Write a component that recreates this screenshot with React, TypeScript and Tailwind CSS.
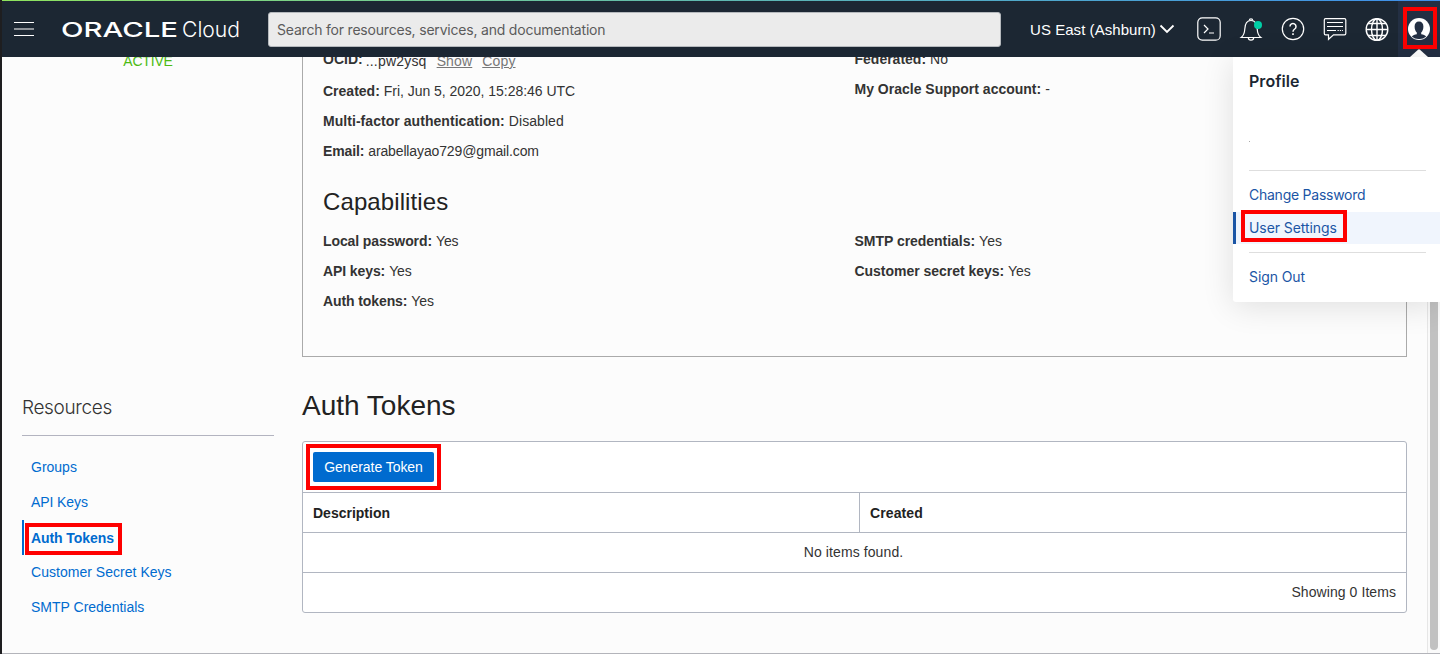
import type { ReactNode } from 'react';

function Field({ label, children }: { label: string; children: ReactNode }) {
  return (
    <div className="flex h-[30px] items-center gap-1 whitespace-nowrap">
      <span className="font-bold">{label}</span>
      <span>{children}</span>
    </div>
  );
}

function Header() {
  return (
    <header className="flex h-[57px] shrink-0 flex-col bg-[#1c2733] text-white">
      <div className="h-px shrink-0 bg-linear-to-r from-[#8fe35c] via-[#5fb8b0] to-[#3f8eea]" />
      <div className="flex flex-1 items-center">
        <svg className="ml-3 h-4 w-5 shrink-0" viewBox="0 0 20 16" shapeRendering="crispEdges">
          <path d="M0 1.5h20M0 14.5h20" stroke="#fff" />
          <path d="M0 8h20" stroke="#8e9399" strokeWidth="2" />
        </svg>
        <svg className="ml-7 h-8 w-[180px] shrink-0" viewBox="0 0 180 32" fill="#fff">
          <text x="-1" y="23.700" fontFamily="Inter" fontWeight="500" fontSize="20.500" textLength="117" lengthAdjust="spacingAndGlyphs">ORACLE</text>
          <text x="120" y="24" fontFamily="Inter" fontWeight="300" fontSize="22" textLength="58" lengthAdjust="spacingAndGlyphs">Cloud</text>
        </svg>
        <div className="ml-[26px] flex h-[35px] w-[733px] shrink-0 items-center rounded-[3px] border border-[#b5b9bd] bg-[#ebebeb] px-2 font-[Inter] text-[14px] tracking-[-0.2px] text-[#5b5b5b]">
          Search for resources, services, and documentation
        </div>
        <div className="ml-[29px] mt-[2px] w-[125px] shrink-0 whitespace-nowrap text-[15px] tracking-[0.05px]">US East (Ashburn)</div>
        <svg className="ml-1 h-[10px] w-4 shrink-0" viewBox="0 0 16 10" fill="none" stroke="#fff" strokeWidth="1.8">
          <path d="M1.500 1.500 8 8l6.500-6.500" />
        </svg>
        <div className="ml-[22px] flex shrink-0 items-center gap-[18px]">
          <svg className="size-6" viewBox="0 0 24 24" fill="none" stroke="#fff" strokeWidth="1.200">
            <rect x="0.800" y="0.800" width="22.400" height="22.400" rx="4.500" />
            <path d="m7 8 4 4-4 4M12 16h5" />
          </svg>
          <svg className="size-6" viewBox="0 0 24 24" fill="none" stroke="#fff" strokeWidth="1.200">
            <path d="M2.200 20.500c2.300-1.800 3.300-4 3.600-8.500.2-5 1.800-8.500 6.200-8.500s6 3.500 6.200 8.500c.3 4.500 1.300 6.700 3.600 8.500Z" />
            <path d="M10.300 3.500a1.700 1.700 0 1 1 3.400 0M9.300 20.500a2.700 2.700 0 0 0 5.400 0" />
            <circle cx="19" cy="8" r="4" fill="#00cea6" stroke="none" />
          </svg>
          <svg className="size-6" viewBox="0 0 24 24" fill="none" stroke="#fff" strokeWidth="1.200">
            <circle cx="12" cy="12" r="10.700" />
            <path d="M9 9.500a3 3 0 1 1 4.700 2.500c-1 .7-1.700 1.200-1.700 2.800" strokeWidth="1.500" />
            <path d="M11.200 16.300h1.600v1.700h-1.600Z" fill="#fff" stroke="none" />
          </svg>
          <svg className="size-6" viewBox="0 0 24 24" fill="none" stroke="#fff" strokeWidth="1.200">
            <path d="M2.500 1.700h19q1.300 0 1.300 1.300v13.500q0 1.300-1.300 1.300H10.500L5.500 22.300v-4.500h-3q-1.200 0-1.200-1.300V3q0-1.300 1.200-1.300Z" />
            <path d="M4 5.500h16M4 9.500h16M4 13.500h9" />
            <path d="M14.500 13.500h5.500" strokeDasharray="1.300 1" />
          </svg>
          <svg className="size-6" viewBox="0 0 24 24" fill="none" stroke="#fff" strokeWidth="1.400">
            <circle cx="12" cy="12.500" r="10.800" />
            <ellipse cx="12" cy="12.500" rx="5.500" ry="10.800" />
            <path d="M12 1.700v21.600M1.200 12.500h21.600M3.200 6.500h17.600M3.200 18.500h17.600" />
          </svg>
        </div>
        <div className="relative ml-[9px] flex h-full w-[42px] shrink-0 items-center justify-center bg-[#232f43]">
          <svg className="size-6" viewBox="0 0 24 24">
            <circle cx="12" cy="12" r="11" fill="#fff" />
            <path d="M12 4.500c2.900 0 4.400 2.100 4.400 5 0 2.700-.9 4.900-2.200 6v1.700c2 .4 4 1.100 5 2.300A10 10 0 0 1 12 22a10 10 0 0 1-7.200-2.500c1-1.200 3-1.900 5-2.300v-1.700c-1.300-1.100-2.200-3.300-2.200-6 0-2.900 1.500-5 4.400-5Z" fill="#232f43" />
          </svg>
          <svg className="absolute bottom-0 left-[12px] h-2 w-[18px]" viewBox="0 0 18 8">
            <path d="M0 8 8 .7q1-.8 2 0L18 8Z" fill="#fff" />
          </svg>
          <div className="absolute left-[5px] top-[6px] h-[42px] w-[34px] border-4 border-[#fe0000]" />
        </div>
      </div>
    </header>
  );
}

function ProfileMenu() {
  return (
    <div className="absolute right-0 top-[57px] flex h-[245px] w-[207px] flex-col rounded-bl-[3px] bg-white font-[Inter] text-[14px] text-[#1b55a5] shadow-[0_4px_32px_rgba(0,0,0,0.12)]">
      <div className="ml-4 mt-[13px] h-[22px] text-[16px] font-semibold leading-[22px] tracking-[0.05px] text-[#1c2733]">Profile</div>
      <div className="ml-4 mt-[49px] size-px bg-[#aaa]" />
      <div className="ml-4 mr-[14px] mt-7 h-px bg-[#dedede]" />
      <div className="ml-4 mt-2 flex h-[33px] items-center pb-[2px] tracking-[-0.25px]">Change Password</div>
      <div className="relative flex h-8 items-center border-l-[3px] border-[#1b55a5] bg-[#f0f5fd] pb-[2px] pl-[13px] tracking-[-0.08px]">
        User Settings
        <div className="absolute left-[5px] top-[-2px] h-8 w-[106px] border-4 border-[#fe0000]" />
      </div>
      <div className="ml-4 mr-[14px] mt-2 h-px bg-[#dedede]" />
      <div className="ml-4 mt-2 flex h-8 items-center pb-[2px] tracking-[-0.1px]">Sign Out</div>
    </div>
  );
}

function Sidebar() {
  return (
    <aside className="ml-5 w-[252px] shrink-0 text-[14px] text-[#006bcf]">
      <div className="flex h-[338px] justify-center leading-4 tracking-[-0.2px] text-[#4dbb14]">
        <span className="-mt-1">ACTIVE</span>
      </div>
      <h2 className="h-[41px] border-b border-[#b3b4c0] font-[Inter] text-[19px] font-light leading-[26px] tracking-[-0.35px] text-[#333]">Resources</h2>
      <nav className="mt-[14px] flex flex-col">
        <a className="flex h-[35px] items-center pl-[9px]">Groups</a>
        <a className="flex h-[35px] items-center pl-[9px] tracking-[-0.1px]">API Keys</a>
        <a className="relative flex h-[35px] items-center border-l-2 border-[#006bcf] pl-[7px] pt-[2px] font-bold tracking-[-0.08px]">
          Auth Tokens
          <span className="absolute left-[1px] top-[3px] h-8 w-[97px] border-4 border-[#fe0000]" />
        </a>
        <a className="flex h-[35px] items-center pl-[9px] tracking-[0.03px]">Customer Secret Keys</a>
        <a className="flex h-[35px] items-center pl-[9px]">SMTP Credentials</a>
      </nav>
    </aside>
  );
}

function UserDetails() {
  return (
    <section className="h-[300px] border border-t-0 border-[#aaa] pl-5 text-[14px] text-[#333]">
      <div className="grid grid-cols-[531px_1fr]">
        <div className="-mt-[11px]">
          <div className="flex h-[30px] items-center whitespace-nowrap">
            <span className="-mt-1 font-bold">OCID:</span>
            <span className="ml-[3px] tracking-[0.2px]">...pw2ysq</span>
            <span className="ml-[10px] tracking-[0.15px] text-[#777] underline">Show</span>
            <span className="ml-[10px] tracking-[0.15px] text-[#777] underline">Copy</span>
          </div>
          <Field label="Created:"><span className="tracking-[-0.03px]">Fri, Jun 5, 2020, 15:28:46 UTC</span></Field>
          <div className="tracking-[0.05px]">
            <Field label="Multi-factor authentication:">Disabled</Field>
          </div>
          <div className="tracking-[-0.13px]">
            <Field label="Email:">arabellayao729@gmail.com</Field>
          </div>
        </div>
        <div className="-mt-[13px] pl-[0.500px]">
          <Field label="Federated:">No</Field>
          <Field label="My Oracle Support account:">-</Field>
        </div>
      </div>
      <h2 className="mt-[21px] h-[39px] text-[24px] leading-[30px] tracking-[0.1px] text-[#222]">Capabilities</h2>
      <div className="grid grid-cols-[531px_1fr]">
        <div className="tracking-[-0.1px]">
          <Field label="Local password:">Yes</Field>
          <Field label="API keys:">Yes</Field>
          <Field label="Auth tokens:">Yes</Field>
        </div>
        <div className="pl-[0.500px] tracking-[-0.03px]">
          <Field label="SMTP credentials:">Yes</Field>
          <Field label="Customer secret keys:">Yes</Field>
        </div>
      </div>
    </section>
  );
}

function TokenTable() {
  return (
    <div className="mt-[17px] h-[172px] rounded-[3px] border border-[#b1b6c1] bg-white text-[14px] text-[#333]">
      <div className="relative flex h-[51px] items-center border-b border-[#b1b6c1] pl-[10px]">
        <button className="h-[30px] w-[121px] rounded-[2px] bg-[#006bcf] tracking-[-0.05px] text-white">Generate Token</button>
        <div className="absolute left-[3px] top-[2px] h-[46px] w-[135px] border-4 border-[#fe0000]" />
      </div>
      <div className="flex h-10 border-b border-[#b1b6c1] font-bold text-[#222]">
        <div className="flex w-[557px] items-center border-r border-[#b1b6c1] pl-[10px] pt-[2px]">Description</div>
        <div className="flex items-center pl-[10px] pt-[2px] tracking-[0.1px]">Created</div>
      </div>
      <div className="flex h-10 items-center justify-center border-b border-[#b1b6c1] pr-[2px] tracking-[0.1px]">No items found.</div>
      <div className="flex h-[39px] items-center justify-end pr-[10px] tracking-[0.07px]">Showing 0 Items</div>
    </div>
  );
}

export default function App() {
  return (
    <div className="relative flex h-[654px] w-[1440px] flex-col overflow-hidden border-l-2 border-[#1e1e20] bg-[#fcfcfc] font-['Liberation_Sans',Arial,sans-serif]">
      <Header />
      <div className="flex h-[597px] overflow-hidden border-b border-[#b3b4ba]">
        <Sidebar />
        <main className="ml-7 w-[1105px] shrink-0">
          <UserDetails />
          <h1 className="mt-[32px] h-[35px] text-[28px] leading-[34px] text-[#222]">Auth Tokens</h1>
          <TokenTable />
        </main>
        <div className="ml-5 flex h-full w-[13px] flex-col items-center border-l border-[#e6e6e6] bg-[#fafafa]">
          <div className="h-[593px] w-2 rounded-full bg-[#c1c1c1]" />
        </div>
      </div>
      <ProfileMenu />
    </div>
  );
}
